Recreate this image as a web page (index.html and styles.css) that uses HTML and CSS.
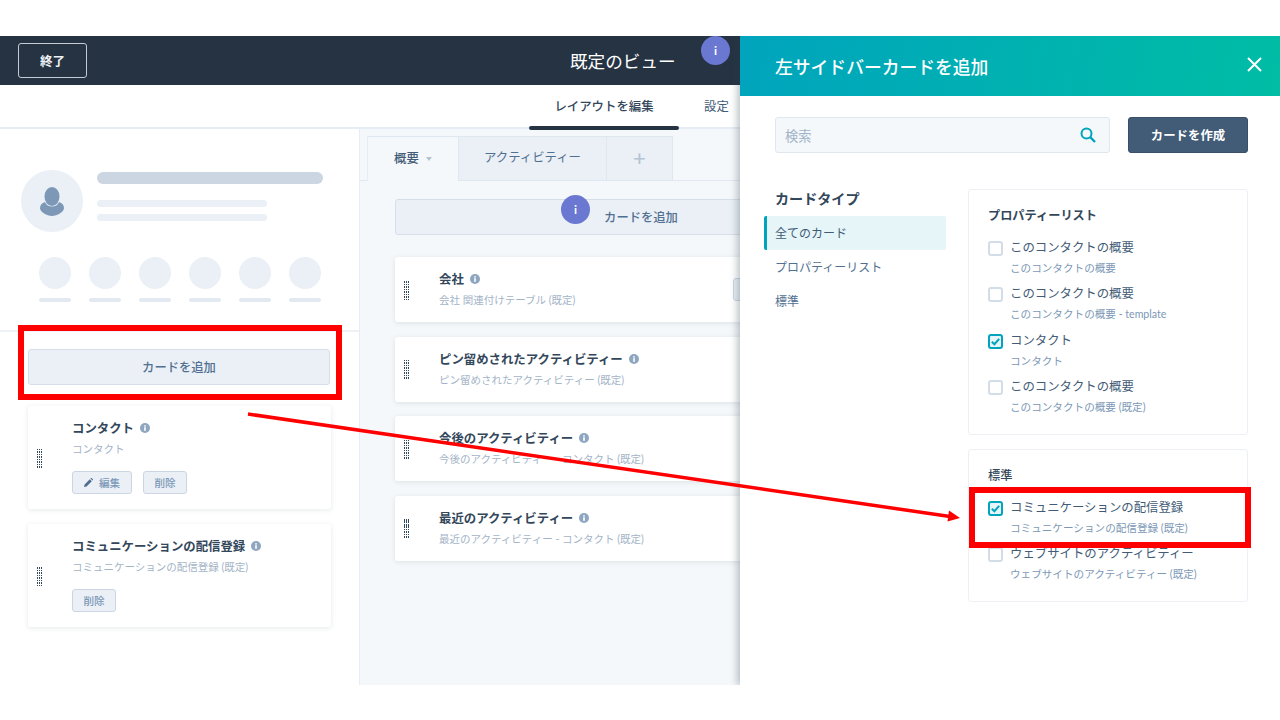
FILE: index.html
```html
<!DOCTYPE html>
<html lang="ja">
<head>
  <meta charset="UTF-8">
  <meta name="viewport" content="width=device-width, initial-scale=1.0">
  <title>既定のビュー</title>
  <link rel="stylesheet" href="styles.css">
</head>
<body>
  <svg width="0" height="0" class="defs">
    <symbol id="info" viewBox="0 0 10 10">
      <circle cx="5" cy="5" r="5" fill="#8fa6c1"></circle>
      <rect x="4.2" y="4.2" width="1.6" height="3.6" fill="#fff"></rect>
      <rect x="4.2" y="2.2" width="1.6" height="1.4" fill="#fff"></rect>
    </symbol>
    <symbol id="check" viewBox="0 0 11 11">
      <path d="M1.8 5.8 L4.4 8.2 L9.2 2.8" fill="none" stroke="#00a4bd" stroke-width="2"></path>
    </symbol>
  </svg>

  <div class="app">
    <header class="topbar">
      <button class="exit-btn">終了</button>
      <div class="view-title">既定のビュー</div>
    </header>

    <nav class="tabbar">
      <div class="tabbar-item active">レイアウトを編集</div>
      <div class="tabbar-item">設定</div>
    </nav>

    <div class="main">
      <aside class="left-col">
        <div class="profile">
          <div class="profile-top">
            <div class="avatar">
              <svg width="24" height="29" viewBox="0 0 24 29">
                <ellipse cx="12" cy="9.5" rx="7.5" ry="9.5" fill="#7c98b6"></ellipse>
                <path d="M5 15 C7 21 17 21 19 15 C22 16 24 18 24 21 C24 25 17 29 12 29 C7 29 0 25 0 21 C0 18 2 16 5 15Z" fill="#7c98b6"></path>
              </svg>
            </div>
            <div class="profile-lines">
              <div class="line-name"></div>
              <div class="line-sub"></div>
              <div class="line-sub"></div>
            </div>
          </div>
          <div class="actions">
            <div class="action"><div class="action-dot"></div><div class="action-label"></div></div>
            <div class="action"><div class="action-dot"></div><div class="action-label"></div></div>
            <div class="action"><div class="action-dot"></div><div class="action-label"></div></div>
            <div class="action"><div class="action-dot"></div><div class="action-label"></div></div>
            <div class="action"><div class="action-dot"></div><div class="action-label"></div></div>
            <div class="action"><div class="action-dot"></div><div class="action-label"></div></div>
          </div>
        </div>

        <div class="left-cards">
          <button class="add-btn">カードを追加</button>

          <div class="card">
            <div class="drag"></div>
            <div class="card-body">
              <div class="card-title">コンタクト <svg class="info"><use href="#info"></use></svg></div>
              <div class="card-sub">コンタクト</div>
              <div class="card-btns">
                <button class="small-btn edit">
                  <svg width="9" height="9" viewBox="0 0 9 9"><path d="M0 9 L0.6 6.4 L5.8 1.2 L7.8 3.2 L2.6 8.4Z M6.4 0.6 L7 0 Q7.4 -0.2 7.8 0.2 L8.8 1.2 Q9.2 1.6 9 2 L8.4 2.6Z" fill="#516f90"></path></svg>
                  編集
                </button>
                <button class="small-btn">削除</button>
              </div>
            </div>
          </div>

          <div class="card">
            <div class="drag"></div>
            <div class="card-body">
              <div class="card-title">コミュニケーションの配信登録 <svg class="info"><use href="#info"></use></svg></div>
              <div class="card-sub">コミュニケーションの配信登録 (既定)</div>
              <div class="card-btns">
                <button class="small-btn">削除</button>
              </div>
            </div>
          </div>
        </div>
      </aside>

      <section class="right-col">
        <div class="tabs">
          <div class="tab current">概要<span class="caret"></span></div>
          <div class="tab wide">アクティビティー</div>
          <div class="tab plus">+</div>
        </div>

        <div class="center-cards">
          <button class="add-btn">カードを追加</button>

          <div class="card short first">
            <div class="drag"></div>
            <div class="card-body">
              <div class="card-title">会社 <svg class="info"><use href="#info"></use></svg></div>
              <div class="card-sub">会社 関連付けテーブル (既定)</div>
            </div>
            <div class="card-stub"></div>
          </div>
          <div class="card short">
            <div class="drag"></div>
            <div class="card-body">
              <div class="card-title">ピン留めされたアクティビティー <svg class="info"><use href="#info"></use></svg></div>
              <div class="card-sub">ピン留めされたアクティビティー (既定)</div>
            </div>
          </div>
          <div class="card short">
            <div class="drag"></div>
            <div class="card-body">
              <div class="card-title">今後のアクティビティー <svg class="info"><use href="#info"></use></svg></div>
              <div class="card-sub">今後のアクティビティー - コンタクト (既定)</div>
            </div>
          </div>
          <div class="card short">
            <div class="drag"></div>
            <div class="card-body">
              <div class="card-title">最近のアクティビティー <svg class="info"><use href="#info"></use></svg></div>
              <div class="card-sub">最近のアクティビティー - コンタクト (既定)</div>
            </div>
          </div>
        </div>
      </section>
    </div>

    <!-- 右パネル -->
    <div class="panel">
      <div class="panel-head">
        <div class="panel-title">左サイドバーカードを追加</div>
        <svg class="panel-close" width="15" height="15" viewBox="0 0 15 15">
          <path d="M1 1 L14 14 M14 1 L1 14" stroke="#fff" stroke-width="2" fill="none"></path>
        </svg>
      </div>

      <div class="panel-search">
        <div class="search-box">
          <span class="search-text">検索</span>
          <svg width="16" height="16" viewBox="0 0 16 16">
            <circle cx="6.5" cy="6.5" r="5" fill="none" stroke="#00a4bd" stroke-width="2"></circle>
            <path d="M10.2 10.2 L15 15" stroke="#00a4bd" stroke-width="2.4"></path>
          </svg>
        </div>
        <button class="create-btn">カードを作成</button>
      </div>

      <div class="panel-body">
        <div class="types">
          <div class="types-title">カードタイプ</div>
          <div class="type-item selected">全てのカード</div>
          <div class="type-item">プロパティーリスト</div>
          <div class="type-item">標準</div>
        </div>

        <div class="groups">
          <div class="group">
            <div class="group-title">プロパティーリスト</div>
            <div class="option">
              <span class="box"></span>
              <div><div class="option-label">このコンタクトの概要</div><div class="option-sub">このコンタクトの概要</div></div>
            </div>
            <div class="option">
              <span class="box"></span>
              <div><div class="option-label">このコンタクトの概要</div><div class="option-sub">このコンタクトの概要 - template</div></div>
            </div>
            <div class="option">
              <span class="box checked"><svg width="11" height="11"><use href="#check"></use></svg></span>
              <div><div class="option-label">コンタクト</div><div class="option-sub">コンタクト</div></div>
            </div>
            <div class="option">
              <span class="box"></span>
              <div><div class="option-label">このコンタクトの概要</div><div class="option-sub">このコンタクトの概要 (既定)</div></div>
            </div>
          </div>

          <div class="group">
            <div class="group-title normal">標準</div>
            <div class="option">
              <span class="box checked"><svg width="11" height="11"><use href="#check"></use></svg></span>
              <div><div class="option-label">コミュニケーションの配信登録</div><div class="option-sub">コミュニケーションの配信登録 (既定)</div></div>
            </div>
            <div class="option">
              <span class="box"></span>
              <div><div class="option-label">ウェブサイトのアクティビティー</div><div class="option-sub">ウェブサイトのアクティビティー (既定)</div></div>
            </div>
          </div>
        </div>
      </div>
    </div>
  </div>

  <!-- 注釈 -->
  <div class="badge badge-top">i</div>
  <div class="badge badge-add">i</div>
  <div class="mark mark-left"></div>
  <div class="mark mark-right"></div>
  <svg class="arrow" width="1280" height="720" viewBox="0 0 1280 720">
    <path d="M248 414 L950 516.5" stroke="#f00" stroke-width="3.5" fill="none"></path>
    <path d="M960 518 L947.5 521.5 L949 510.5Z" fill="#f00"></path>
  </svg>
</body>
</html>
```

FILE: styles.css
```css
* {
  box-sizing: border-box;
}

body {
  margin: 0;
  background-color: #fff;
  color: #33475b;
  font-family: Lato, 'Noto Sans CJK JP', sans-serif;
  height: 720px;
  overflow: hidden;
}

button {
  font-family: inherit;
  padding: 0;
}

.defs {
  position: absolute;
}

.app {
  position: relative;
  margin-top: 36px;
  height: 649px;
  display: flex;
  flex-direction: column;
  overflow: hidden;
}

/* ヘッダー */
.topbar {
  height: 49px;
  flex: none;
  display: flex;
  align-items: center;
  padding-left: 18px;
  background-color: #253342;
}

.exit-btn {
  width: 69px;
  height: 35px;
  background: transparent;
  border: 1.5px solid #c3ccd6;
  border-radius: 3px;
  color: #eef2f6;
  font-size: 12.5px;
  font-weight: 700;
}

.view-title {
  margin-left: 483px;
  color: #fff;
  font-size: 17.6px;
  font-weight: 400;
}

.tabbar {
  height: 44px;
  flex: none;
  display: flex;
  padding-left: 529px;
  border-bottom: 2px solid #e6edf4;
  font-size: 12.4px;
  color: #425b76;
}

.tabbar-item {
  display: flex;
  align-items: center;
  margin-left: 25px;
  font-weight: 400;
}

.tabbar-item.active {
  position: relative;
  width: 150px;
  margin-left: 0;
  justify-content: center;
  color: #33475b;
  font-weight: 500;
}

.tabbar-item.active::after {
  content: '';
  position: absolute;
  left: 0;
  right: 0;
  bottom: -3px;
  height: 4px;
  border-radius: 2px;
  background-color: #253342;
}

.main {
  flex: 1;
  display: flex;
  min-height: 0;
}

/* 左カラム */
.left-col {
  width: 360px;
  flex: none;
  border-right: 1px solid #e6edf4;
}

.profile {
  height: 203px;
  padding-top: 41px;
  border-bottom: 2px solid #eef2f7;
}

.profile-top {
  display: flex;
  padding-left: 21px;
}

.avatar {
  width: 62px;
  height: 62px;
  border-radius: 50%;
  background-color: #eaf0f6;
  display: flex;
  align-items: center;
  justify-content: center;
}

.profile-lines {
  margin-left: 14px;
  padding-top: 2px;
}

.line-name {
  width: 226px;
  height: 12px;
  border-radius: 6px;
  background-color: #cbd6e2;
}

.line-sub {
  width: 170px;
  height: 7px;
  margin-top: 7px;
  border-radius: 4px;
  background-color: #eaf0f6;
}

.line-name + .line-sub {
  margin-top: 16px;
}

.actions {
  display: flex;
  gap: 18px;
  margin-top: 25px;
  padding-left: 39px;
}

.action-dot {
  width: 32px;
  height: 32px;
  border-radius: 50%;
  background-color: #eaf0f6;
}

.action-label {
  height: 4px;
  margin-top: 9px;
  border-radius: 2px;
  background-color: #e3e9f1;
}

.left-cards {
  padding: 17px 0 0 28px;
}

.add-btn {
  display: block;
  width: 302px;
  height: 36px;
  background-color: #eaf0f6;
  border: 1.5px solid #d6dfe9;
  border-radius: 3px;
  color: #516f90;
  font-size: 12.3px;
  font-weight: 500;
}

.card {
  display: flex;
  align-items: center;
  width: 303px;
  height: 103px;
  margin-top: 15px;
  padding-left: 9px;
  background-color: #fff;
  border-radius: 3px;
  box-shadow: 0 1px 5px rgba(45, 62, 80, 0.12);
}

.add-btn + .card {
  margin-top: 21px;
}

.drag {
  width: 5px;
  height: 20px;
  flex: none;
  margin-right: 30px;
  background:
    repeating-linear-gradient(90deg, transparent 0 1px, #fff 1px 2px),
    repeating-linear-gradient(0deg, #33475b 0 1.5px, #fff 1.5px 2.5px);
}

.card-body {
  align-self: flex-start;
  padding-top: 13px;
}

.card-title {
  display: flex;
  align-items: center;
  height: 18px;
  font-size: 12.4px;
  font-weight: 700;
  color: #33475b;
  white-space: pre;
}

.info {
  width: 10px;
  height: 10px;
  margin-left: 3px;
}

.card-sub {
  height: 16px;
  margin-top: 4px;
  line-height: 16px;
  font-size: 10.5px;
  color: #a3b4c7;
  white-space: nowrap;
}

.card-btns {
  display: flex;
  gap: 11px;
  margin-top: 14px;
}

.small-btn {
  display: flex;
  align-items: center;
  justify-content: center;
  gap: 6px;
  width: 44px;
  height: 23px;
  background-color: #eaf0f6;
  border: 1px solid #cbd6e2;
  border-radius: 3px;
  color: #7c98b6;
  font-size: 10.6px;
  font-weight: 500;
}

.small-btn.edit {
  width: 60px;
}

/* 中央カラム */
.right-col {
  width: 380px;
  flex: none;
  overflow: hidden;
  background-color: #f5f8fa;
  padding-top: 7px;
}

.tabs {
  display: flex;
  height: 45px;
  padding-left: 7px;
  border-bottom: 1.5px solid #e1e8ef;
}

.tab {
  display: flex;
  align-items: center;
  justify-content: center;
  height: 45px;
  padding-bottom: 3px;
  background-color: #eaf0f6;
  border: 1.5px solid #dfe7ef;
  border-left: 0;
  font-size: 12.4px;
  color: #516f90;
}

.tab.current {
  width: 92px;
  background-color: #f5f8fa;
  border-left: 1.5px solid #e6edf3;
  border-bottom: 0;
  color: #425b76;
  font-weight: 500;
}

.tab.wide {
  width: 148px;
}

.tab.plus {
  width: 66px;
  color: #b4c4d5;
  font-size: 22px;
  font-weight: 500;
}

.caret {
  margin-left: 7px;
  margin-top: 2px;
  border: 3px solid transparent;
  border-top: 4px solid #b3c2d3;
  border-bottom: 0;
}

.center-cards {
  padding: 18px 0 0 35px;
  width: 527px;
}

.center-cards .add-btn {
  width: 492px;
}

.card.short {
  width: 492px;
  height: 65px;
  margin-top: 14.5px;
}

.card.short.first {
  margin-top: 22px;
}

.card-stub {
  width: 50px;
  height: 23px;
  margin-left: auto;
  margin-right: 104px;
  background-color: #eaf0f6;
  border: 1px solid #cbd6e2;
  border-radius: 3px;
}

/* 右パネル */
.panel {
  position: absolute;
  top: 0;
  left: 740px;
  right: 0;
  bottom: 0;
  background-color: #fff;
  box-shadow: -3px 0 7px rgba(45, 62, 80, 0.3);
}

.panel-head {
  display: flex;
  align-items: center;
  justify-content: space-between;
  height: 60px;
  padding: 0 18px 0 35px;
  background: linear-gradient(100deg, #00a4bd, #00bda5);
}

.panel-title {
  color: #fff;
  font-size: 17.8px;
  font-weight: 500;
}

.panel-close {
  margin-top: -3px;
}

.panel-search {
  display: flex;
  gap: 18px;
  padding: 21px 32px 0 35px;
}

.search-box {
  display: flex;
  align-items: center;
  justify-content: space-between;
  width: 335px;
  height: 36px;
  padding: 0 13px 0 9px;
  background-color: #f5f8fa;
  border: 1.5px solid #e0e7ef;
  border-radius: 3px;
}

.search-text {
  font-size: 13.2px;
  color: #a0b3c8;
}

.create-btn {
  width: 120px;
  height: 36px;
  background-color: #425b76;
  border: 1px solid #3a5069;
  border-radius: 3px;
  color: #fff;
  font-size: 12.4px;
  font-weight: 700;
}

.panel-body {
  display: flex;
  padding: 36px 32px 0 24px;
}

.types {
  width: 182px;
  flex: none;
}

.types-title {
  height: 20px;
  line-height: 20px;
  margin-left: 11px;
  font-size: 14.1px;
  font-weight: 700;
  color: #33475b;
}

.types-title + .type-item {
  margin-top: 7px;
}

.type-item {
  display: flex;
  align-items: center;
  height: 34px;
  padding: 0 0 2px 11px;
  font-size: 12px;
  color: #516f90;
}

.type-item.selected {
  padding-left: 8px;
  background-color: #e5f5f8;
  border-left: 3px solid #00a4bd;
  border-radius: 2px;
  color: #425b76;
}

.groups {
  width: 280px;
  margin-left: 22px;
}

.group {
  padding: 16px 18px 19px 19px;
  margin-bottom: 14px;
  border: 1.5px solid #edf1f6;
  border-radius: 3px;
}

.group-title {
  height: 18px;
  line-height: 18px;
  margin-top: 1px;
  margin-bottom: 13.5px;
  font-size: 12.2px;
  font-weight: 700;
  color: #33475b;
}

.group-title.normal {
  font-weight: 500;
}

.option {
  display: flex;
  margin-bottom: 9.5px;
}

.option:last-child {
  margin-bottom: 0;
}

.box {
  display: flex;
  align-items: center;
  justify-content: center;
  width: 15px;
  height: 15px;
  flex: none;
  margin: 2px 7px 0 0;
  border: 2px solid #d3dde8;
  border-radius: 3px;
}

.box.checked {
  background-color: #e5f5f8;
  border-color: #00a4bd;
}

.option-label {
  height: 18px;
  line-height: 18px;
  font-size: 12.4px;
  color: #425b76;
  white-space: nowrap;
}

.option-sub {
  height: 16px;
  margin-top: 3px;
  line-height: 16px;
  font-size: 10.6px;
  color: #7c98b6;
  white-space: nowrap;
}

/* 注釈 */
.badge {
  position: absolute;
  width: 29px;
  height: 29px;
  border-radius: 50%;
  background-color: #6a78d1;
  color: #fff;
  font-size: 12px;
  font-weight: 700;
  line-height: 29px;
  text-align: center;
}

.badge-top {
  left: 701px;
  top: 36px;
}

.badge-add {
  left: 561px;
  top: 195px;
}

.mark {
  position: absolute;
  border: 6px solid #f00;
}

.mark-left {
  left: 18px;
  top: 325px;
  width: 324px;
  height: 75px;
}

.mark-right {
  left: 969px;
  top: 487px;
  width: 282px;
  height: 61px;
}

.arrow {
  position: absolute;
  left: 0;
  top: 0;
}
```
